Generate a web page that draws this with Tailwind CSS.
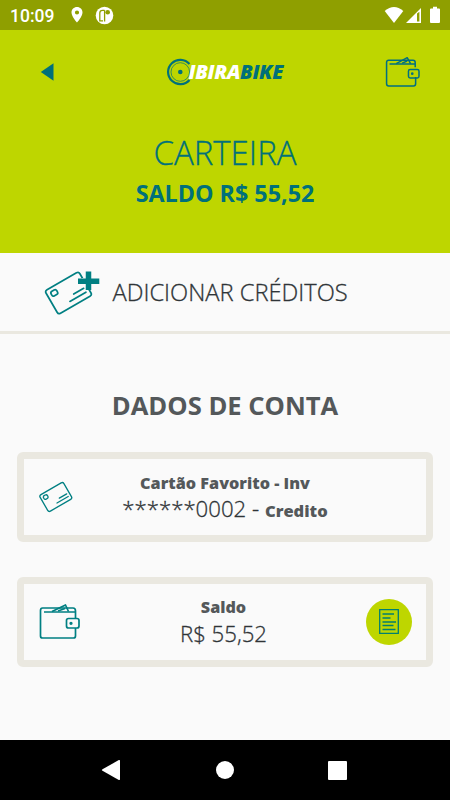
<!DOCTYPE html>
<html lang="pt-BR">
<head>
    <meta charset="UTF-8">
    <meta name="viewport" content="width=device-width, initial-scale=1.0">
    <title>Ibirabike - Carteira</title>
    <script src="https://cdn.jsdelivr.net/npm/@tailwindcss/browser@4"></script>
</head>
<body class="w-[450px] h-[800px] overflow-hidden bg-[#fafafa] font-['Open_Sans',sans-serif] text-[#2f3437] flex flex-col">

    <!-- Status bar -->
    <div class="h-[30px] shrink-0 bg-[#8f9f00] flex items-center justify-between pl-[10px] pr-[9px] text-white">
        <div class="flex items-center">
            <span class="w-[60px] font-['Roboto',sans-serif] font-medium text-[17.5px] leading-[30px] pt-px">10:09</span>
            <svg class="w-[14px] h-[18px] shrink-0" viewBox="0 0 14 18" fill="currentColor">
                <path fill-rule="evenodd" d="M7 1C3.900 1 1.500 3.400 1.500 6.400 1.500 10.300 7 16.500 7 16.500s5.500-6.200 5.500-10.100C12.500 3.400 10.100 1 7 1Zm0 3.400a2.100 2.100 0 1 1 0 4.200 2.100 2.100 0 0 1 0-4.200Z"/>
            </svg>
            <svg class="ml-[11px] w-[19px] h-[19px] shrink-0" viewBox="0 0 19 19">
                <circle cx="9.500" cy="9.500" r="8.800" fill="#fff"/>
                <path d="M9.500 4.300H7.500Q4.800 4.300 4.800 7V14.800H8M9.600 4.300V15.500" fill="none" stroke="#8f9f00" stroke-width="1.300"/>
                <circle cx="12.700" cy="6.300" r="2.300" fill="#8f9f00"/>
            </svg>
        </div>
        <div class="flex items-center">
            <svg class="w-[20px] h-[18px]" viewBox="0 0 20 18" fill="currentColor">
                <path d="M.7 5Q10-2.800 19.300 5L10 17Z"/>
            </svg>
            <svg class="ml-px w-[17px] h-[18px]" viewBox="0 0 17 18">
                <path d="M1 17 16 2V17Z" fill="#fff"/>
                <path d="M12 7.500 14.400 5.800V15.500H12Z" fill="#8f9f00"/>
            </svg>
            <svg class="ml-[7px] w-[12px] h-[18px]" viewBox="0 0 12 18" fill="currentColor">
                <path d="M4 .8h4v1.700h2q1 0 1 1V16q0 1-1 1H2q-1 0-1-1V3.500q0-1 1-1h2Z"/>
            </svg>
        </div>
    </div>

    <!-- Header -->
    <header class="h-[222.500px] shrink-0 bg-[#bed600] text-[#00707a]">
        <div class="h-[84px] flex items-center justify-between pl-[40px] pr-[29px]">
            <svg class="w-[15px] h-[18px]" viewBox="0 0 15 18" fill="currentColor">
                <path d="M.8 9 13.500.2V17.800Z"/>
            </svg>
            <div class="flex items-center ml-[13px]">
                <svg class="w-[27px] h-[28px] shrink-0" viewBox="0 0 27 28" fill="none" stroke="currentColor">
                    <path d="M22.500 6A12.200 12.200 0 1 0 22.500 22" stroke-width="2.200"/>
                    <circle cx="13.300" cy="14" r="9.300" stroke-width=".7"/>
                    <circle cx="13.300" cy="14" r="2.300" fill="currentColor" stroke="none"/>
                </svg>
                <span class="-ml-[5px] w-[98px] text-[20px] leading-6 font-extrabold italic tracking-[-0.350px] whitespace-nowrap"><span class="text-white">IBIRA</span>BIKE</span>
            </div>
            <svg class="w-[36px] h-[32px]" viewBox="0 0 42 38" fill="none" stroke="#006f80" stroke-width="1.800" stroke-linejoin="round">
                <path d="M35.500 13.500V8Q35.500 5 33 5H4Q1.500 5 1.500 7.500V33Q1.500 35.500 4 35.500H33.500Q36 35.500 36 33V25M5 9.500H36"/>
                <path d="M13 9 26 2 30 9M20 8.500 26 6"/>
                <rect x="27.500" y="16" width="12.500" height="10" rx="2"/>
                <circle cx="32" cy="21" r=".7" fill="#006f80"/>
            </svg>
        </div>
        <h1 class="mt-[19px] h-10 leading-10 text-[33px] font-light [-webkit-text-stroke:0.3px] text-center">CARTEIRA</h1>
        <p class="mt-[4px] h-8 leading-8 text-[23.300px] font-bold text-center">SALDO R$ 55,52</p>
    </header>

    <!-- Add credits -->
    <div class="h-[81px] shrink-0 border-b-[3px] border-[#eae8e0] flex items-center pl-[44px]">
        <svg class="w-[57px] h-[46px] shrink-0" viewBox="0 0 57 46" fill="none" stroke="#007f82" stroke-width="1.700" stroke-linecap="round">
            <g transform="translate(24.500 24) rotate(-30)">
                <rect x="-19.500" y="-13.500" width="39" height="27" rx="2.500"/>
                <rect x="-15.500" y="-9.800" width="6.500" height="5.300" rx="2"/>
                <path d="M4 3.500H15.500M-3 8H15.500"/>
            </g>
            <path d="M37.500 9h14v8.500h-7l-3 2-4-5Z" fill="#fafafa" stroke="none"/>
            <path d="M44.500 2.500V21M34 12.300H55.300" stroke-width="5.500" stroke-linecap="butt"/>
        </svg>
        <span class="ml-[11.500px] text-[23.700px] leading-8 font-light [-webkit-text-stroke:0.3px] whitespace-nowrap">ADICIONAR CRÉDITOS</span>
    </div>

    <!-- Account data -->
    <main class="h-[406.500px] shrink-0 px-[17px]">
        <h2 class="pt-[56px] h-[118.500px] leading-8 text-[25.600px] font-bold text-center text-[#54585a]">DADOS DE CONTA</h2>

        <section class="h-[90px] border-[7.500px] border-[#eae8e0] rounded-[6px] flex items-center">
            <svg class="ml-[14px] w-[36px] h-[34px] shrink-0" viewBox="0 0 36 34" fill="none" stroke="#007f82" stroke-width="1.300" stroke-linecap="round">
                <g transform="translate(17.800 17) rotate(-30)">
                    <rect x="-13.700" y="-9.500" width="27.400" height="19" rx="2"/>
                    <rect x="-11" y="-7" width="4.500" height="4" rx="1.600"/>
                    <path d="M2.500 2.700H11M-2 5.800H11"/>
                </g>
            </svg>
            <div class="w-[302px] pt-px text-center whitespace-nowrap">
                <p class="text-[16.200px] leading-6 font-extrabold text-[#54585a]">Cartão Favorito - Inv</p>
                <p class="text-[22.200px] leading-[28px] font-light [-webkit-text-stroke:0.3px]">******0002 - <span class="text-[16.500px] font-extrabold text-[#54585a] [-webkit-text-stroke:0]">Credito</span></p>
            </div>
        </section>

        <section class="mt-[34.500px] h-[90px] border-[7.500px] border-[#eae8e0] rounded-[6px] flex items-center">
            <svg class="ml-[14px] w-[42px] h-[38px] shrink-0" viewBox="0 0 42 38" fill="none" stroke="#007f82" stroke-width="1.700" stroke-linejoin="round">
                <path d="M37.500 15V8Q37.500 5 35 5H4.500Q2.500 5 2.500 7.500V33Q2.500 35 4.500 35H35.500Q37.500 35 37.500 33V25M6 9H37"/>
                <path d="M14 8.500 27.500 2 30.500 8.500M20 8 27 5.500"/>
                <rect x="28.500" y="15.500" width="12.500" height="9.500" rx="2"/>
                <circle cx="33" cy="20.300" r=".8" fill="#007f82"/>
            </svg>
            <div class="w-[286px] pl-px text-center whitespace-nowrap">
                <p class="text-[16.200px] leading-6 font-extrabold text-[#54585a]">Saldo</p>
                <p class="text-[22.200px] leading-[30px] font-light [-webkit-text-stroke:0.3px]">R$ 55,52</p>
            </div>
            <div class="w-[46px] h-[46px] shrink-0 rounded-full bg-[#bed600] flex items-center justify-center">
                <svg class="w-[20px] h-[25px]" viewBox="0 0 20 25" fill="none" stroke="#007f70" stroke-width="1.300">
                    <path d="M.7.700H19.300V24.300H.7Z"/>
                    <path d="M3.500 5H15M3.500 9H11.500M3.500 13H17M3.500 16.500H14.500M3.500 20.500H16.500" stroke-width="1.500"/>
                </svg>
            </div>
        </section>
    </main>

    <!-- Navigation bar -->
    <nav class="h-[60px] shrink-0 bg-black flex items-center justify-between px-[101px] text-white">
        <svg class="w-[20px] h-[22px]" viewBox="0 0 20 22" fill="currentColor">
            <path d="M1.500 10.200 17.800 1.100Q19 .5 19 1.700V20.300Q19 21.500 17.800 20.900L1.500 11.800Q.2 11 1.500 10.200Z"/>
        </svg>
        <div class="ml-px w-[18px] h-[18px] rounded-full bg-white"></div>
        <div class="mr-[2px] w-[19px] h-[19px] rounded-[1px] bg-white"></div>
    </nav>

</body>
</html>
